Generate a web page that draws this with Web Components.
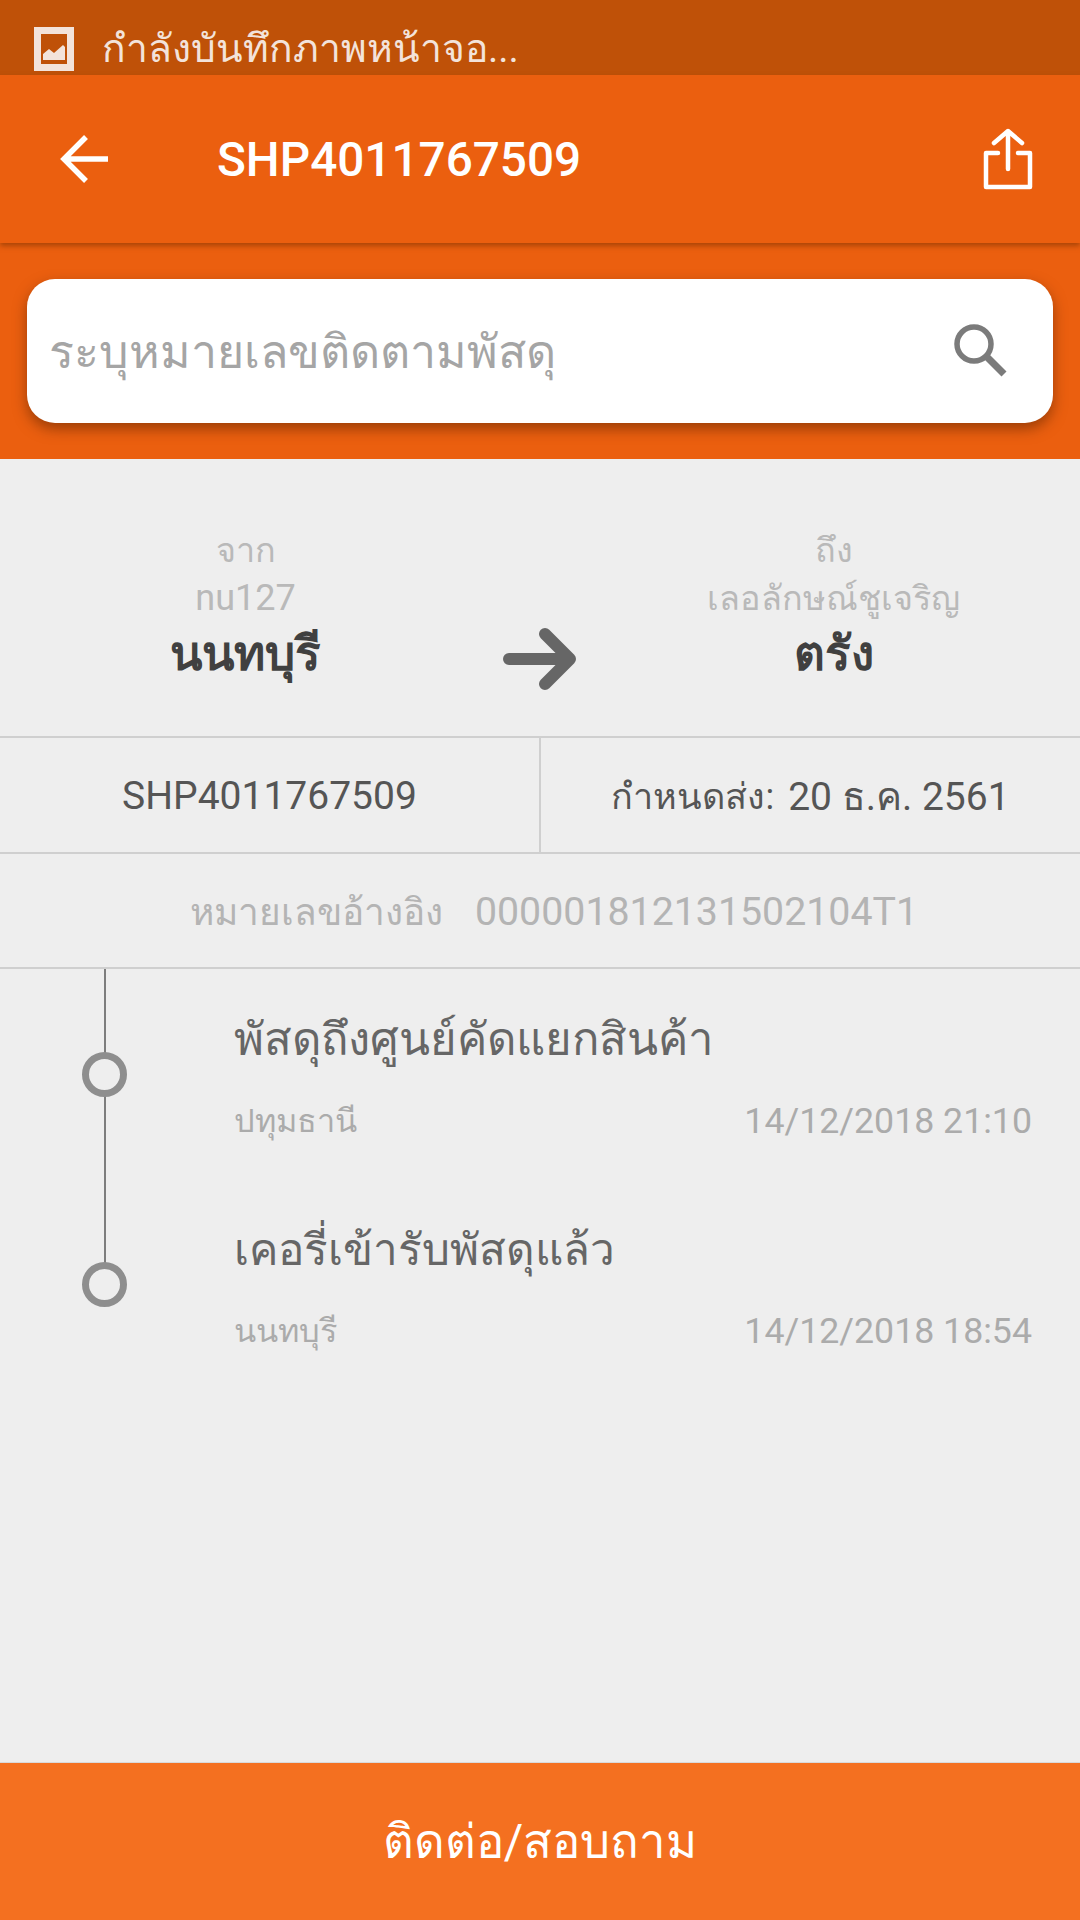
<!DOCTYPE html>
<html>
<head>
<meta charset="utf-8">
<style>
  html, body { margin: 0; height: 100%; }
  body { font-family: Roboto, "Noto Sans", "DejaVu Sans", sans-serif; background: #eee; }
  #app { display: flex; flex-direction: column; width: 1080px; height: 1920px; overflow: hidden; }
</style>
</head>
<body>
<div id="app">
  <status-bar>กำลังบันทึกภาพหน้าจอ...</status-bar>
  <app-bar>SHP4011767509</app-bar>
  <search-box placeholder="ระบุหมายเลขติดตามพัสดุ"></search-box>
  <route-summary></route-summary>
  <parcel-meta></parcel-meta>
  <ref-row></ref-row>
  <track-list>
    <track-item title="พัสดุถึงศูนย์คัดแยกสินค้า" place="ปทุมธานี" time="14/12/2018 21:10" style="--title-size: 45.4px"></track-item>
    <track-item title="เคอรี่เข้ารับพัสดุแล้ว" place="นนทบุรี" time="14/12/2018 18:54" last></track-item>
  </track-list>
  <contact-button>ติดต่อ/สอบถาม</contact-button>
</div>
<script>
function define(name, html, init) {
  customElements.define(name, class extends HTMLElement {
    connectedCallback() {
      if (this.shadowRoot) return;
      this.attachShadow({ mode: "open" }).innerHTML = html;
      if (init) init(this);
    }
  });
}

define("status-bar", `
  <style>
    :host { display: flex; align-items: center; flex: none; height: 75px; background: #bf5108; color: #f3e3da; font-size: 39px; box-sizing: border-box; padding: 21px 0 0 34px; gap: 28px; overflow: hidden; }
    svg { display: block; flex: none; margin-top: 2px; }
  </style>
  <svg width="40" height="44" viewBox="0 0 40 44">
    <rect x="3.5" y="3.5" width="33" height="37" fill="none" stroke="#f3e3da" stroke-width="7"/>
    <path d="M9 33V27L15 22L20 26L29 18L31 20V33Z" fill="#f3e3da"/>
  </svg>
  <slot></slot>
`);

define("app-bar", `
  <style>
    :host { display: flex; align-items: center; flex: none; height: 168px; background: #eb5f0f; color: #fff; font-size: 47.7px; font-weight: 500; box-shadow: 0 3px 5px rgba(120,50,0,.55); position: relative; z-index: 1; box-sizing: border-box; padding-left: 60px; }
    .back { display: block; flex: none; margin-right: 109px; }
    .title { flex: 1; padding-top: 2px; }
    .share { display: block; flex: none; margin-right: 47px; }
  </style>
  <svg class="back" width="48" height="50" viewBox="0 0 48 50" fill="none" stroke="#fff" stroke-width="5.5">
    <path d="M48 25H4M26 3L4 25L26 47"/>
  </svg>
  <span class="title"><slot></slot></span>
  <svg class="share" width="50" height="62" viewBox="0 0 50 62" fill="none" stroke="#fff" stroke-width="4.5" stroke-linecap="round" stroke-linejoin="round">
    <path d="M15 25H3V59H47V25H35"/>
    <path d="M25 41V3M11 15L25 3L39 15"/>
  </svg>
`);

define("search-box", `
  <style>
    :host { display: block; flex: none; background: #eb5f0f; padding: 36px 27px; }
    .box { display: flex; align-items: center; justify-content: space-between; height: 144px; border-radius: 28px; background: #fff; box-shadow: 0 6px 14px rgba(90,35,0,.55); padding: 0 46px 0 22px; box-sizing: border-box; color: #a5a5a5; font-size: 46.5px; }
    svg { display: block; margin-top: -3px; }
  </style>
  <div class="box">
    <span id="ph"></span>
    <svg width="54" height="54" viewBox="0 0 54 54" fill="none" stroke="#7b7b7b">
      <circle cx="21" cy="21" r="17" stroke-width="5.5"/>
      <path d="M33 33L51 51" stroke-width="7"/>
    </svg>
  </div>
`, el => { el.shadowRoot.getElementById("ph").textContent = el.getAttribute("placeholder"); });

define("route-summary", `
  <style>
    :host { display: grid; grid-template-columns: 491px 98px 489px; align-items: start; flex: none; height: 277px; box-sizing: border-box; padding-top: 67px; color: #b9b9b9; font-size: 34.2px; text-align: center; }
    .line { line-height: 48px; }
    .latin { font-size: 36px; }
    .big { color: #404040; font-size: 47.5px; font-weight: 700; line-height: 66px; margin-top: -1px; }
    svg { display: block; margin: 102px auto 0; }
  </style>
  <div>
    <div class="line">จาก</div>
    <div class="line latin">nu127</div>
    <div class="big">นนทบุรี</div>
  </div>
  <svg width="74" height="62" viewBox="0 0 74 62" fill="none" stroke="#666" stroke-width="12" stroke-linecap="round" stroke-linejoin="round">
    <path d="M6 31H67M42 6L67 31L42 56"/>
  </svg>
  <div>
    <div class="line">ถึง</div>
    <div class="line">เลอลักษณ์ชูเจริญ</div>
    <div class="big">ตรัง</div>
  </div>
`);

define("parcel-meta", `
  <style>
    :host { display: grid; grid-template-columns: 541px 1fr; flex: none; height: 116px; border-top: 2px solid #cfcfcf; box-sizing: border-box; color: #555; font-size: 39px; }
    div { display: flex; align-items: center; justify-content: center; padding-top: 2px; }
    .a { border-right: 2px solid #cfcfcf; }
    small { font-size: 36px; margin-right: 14px; }
  </style>
  <div class="a">SHP4011767509</div>
  <div><small>กำหนดส่ง:</small>20 ธ.ค. 2561</div>
`);

define("ref-row", `
  <style>
    :host { display: flex; align-items: center; justify-content: center; flex: none; height: 117px; border-top: 2px solid #cfcfcf; border-bottom: 2px solid #cfcfcf; box-sizing: border-box; padding: 2px 0 0 28px; color: #b4b4b4; font-size: 39.3px; gap: 32px; }
    small { font-size: 37px; }
  </style>
  <small>หมายเลขอ้างอิง</small><span>000001812131502104T1</span>
`);

define("track-list", `
  <style>
    :host { display: block; flex: 1; min-height: 0; }
  </style>
  <slot></slot>
`);

define("track-item", `
  <style>
    :host { display: grid; grid-template-columns: 234px 1fr; height: 210px; }
    .rail { position: relative; }
    .rail::before { content: ""; position: absolute; left: 104px; width: 2px; top: 0; height: 210px; background: #7d7d7d; }
    :host([last]) .rail::before { height: 105px; }
    .dot { position: absolute; left: 82px; top: 83px; width: 45px; height: 45px; border: 7px solid #8e8e8e; border-radius: 50%; box-sizing: border-box; background: #eee; }
    .body { padding: 35px 48px 0 0; }
    .title { color: #666; font-size: var(--title-size, 44px); line-height: 72px; }
    .sub { display: flex; justify-content: space-between; color: #ababab; font-size: 32.5px; line-height: 50px; margin-top: 20px; }
    .time { font-size: 35.7px; }
  </style>
  <div class="rail"><div class="dot"></div></div>
  <div class="body">
    <div class="title" id="t"></div>
    <div class="sub"><span id="p"></span><span id="d" class="time"></span></div>
  </div>
`, el => {
  const r = el.shadowRoot;
  r.getElementById("t").textContent = el.getAttribute("title");
  r.getElementById("p").textContent = el.getAttribute("place");
  r.getElementById("d").textContent = el.getAttribute("time");
});

define("contact-button", `
  <style>
    :host { display: flex; align-items: center; justify-content: center; flex: none; height: 158px; background: #f47020; color: #fff; font-size: 47.3px; border-top: 1px solid #d9d9d9; box-sizing: border-box; }
  </style>
  <slot></slot>
`);
</script>
</body>
</html>
